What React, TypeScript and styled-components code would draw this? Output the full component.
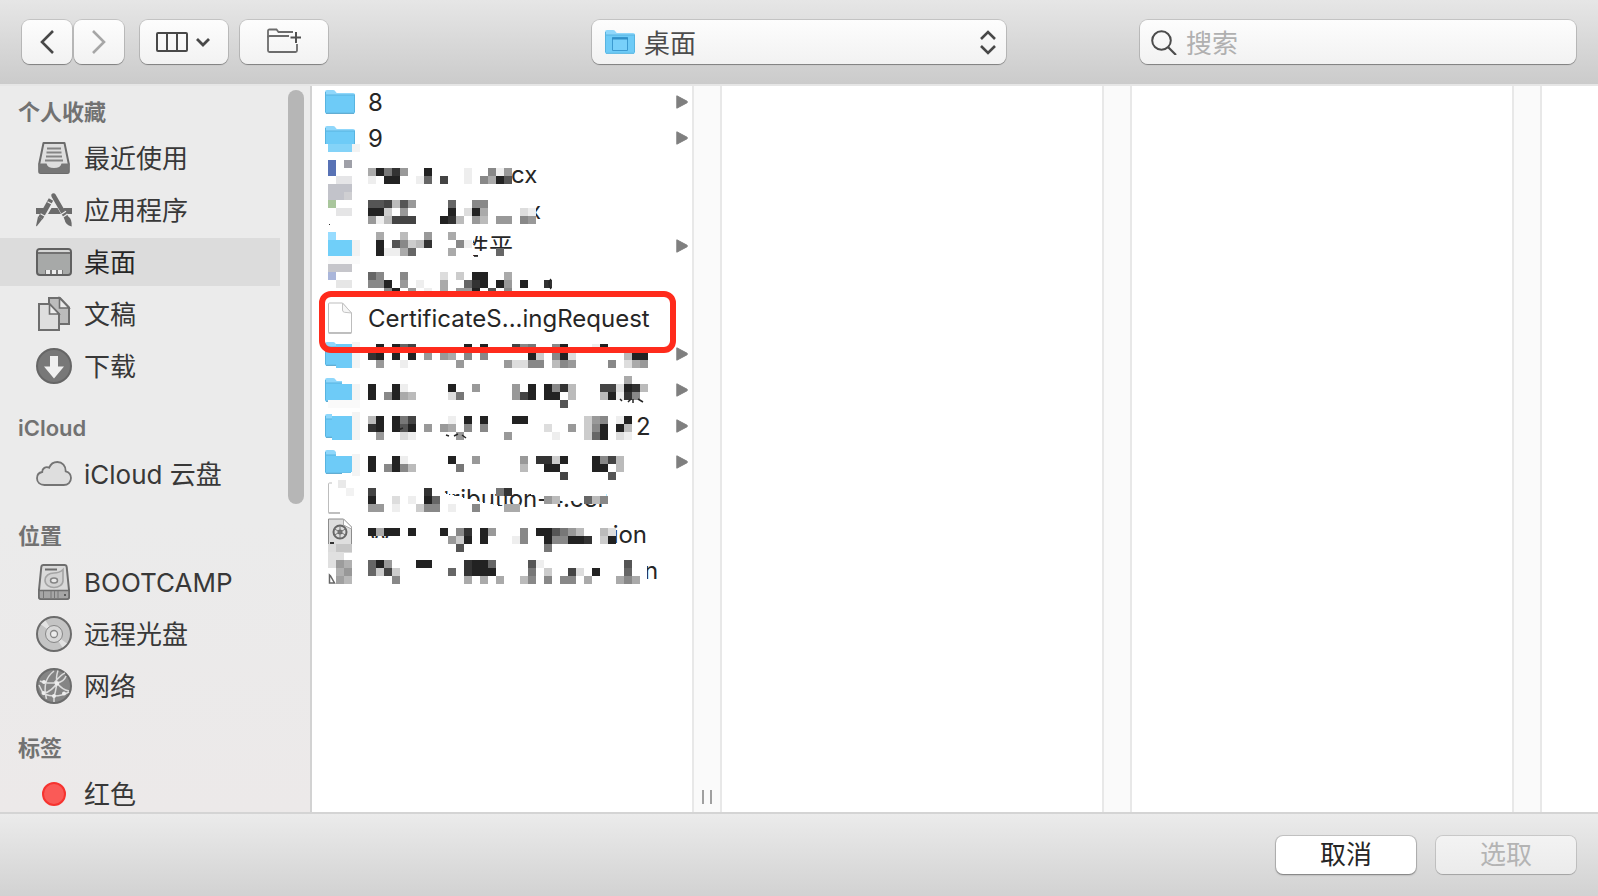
import React from "react";
import styled, { createGlobalStyle } from "styled-components";

const GlobalStyle = createGlobalStyle`
  *, *::before, *::after { box-sizing: border-box; }
  body { margin: 0; overflow: hidden; }
  body, button, input, select {
    font-family: Inter, "Noto Sans CJK SC", sans-serif;
    font-size: 26px;
  }
  svg { display: block; flex: none; }
`;

/* ---------- Window frame ---------- */

const Window = styled.div`
  display: flex;
  flex-direction: column;
  height: 100vh;
  background: #fff;
  color: #262626;
`;

const Toolbar = styled.header`
  position: relative;
  z-index: 1;
  display: grid;
  grid-template-columns: 1fr minmax(200px, 414px) 1fr;
  align-items: center;
  height: 84px;
  flex: none;
  padding: 0 22px;
  background: linear-gradient(#e6e6e6, #cbcbcb);
  box-shadow: 0 2px 0 #e6e6e6;
`;

const ToolGroup = styled.div<{ $gap: number }>`
  display: flex;
  gap: ${(p) => p.$gap}px;
`;

const raised = `
  border: 0;
  border-radius: 8px;
  background: linear-gradient(#fdfdfd, #f2f2f2);
  box-shadow: 0 0 0 1px rgba(0, 0, 0, 0.13), 0 1px 1px rgba(0, 0, 0, 0.3);
`;

const ToolButton = styled.button<{ $width: number }>`
  ${raised}
  display: flex;
  align-items: center;
  justify-content: center;
  width: ${(p) => p.$width}px;
  height: 44px;
  padding: 0;
`;

const Location = styled.div`
  position: relative;
  height: 44px;
`;

const LocationSelect = styled.select`
  ${raised}
  appearance: none;
  width: 100%;
  height: 44px;
  padding: 2px 48px 0 52px;
  color: #4c4c4c;
`;

const SelectIcon = styled.span<{ $side: "left" | "right" }>`
  position: absolute;
  top: 10px;
  ${(p) => (p.$side === "left" ? "left: 13px;" : "right: 10px;")}
  pointer-events: none;
`;

const Search = styled.label`
  ${raised}
  justify-self: end;
  display: flex;
  align-items: center;
  gap: 9px;
  width: min(436px, 90%);
  height: 44px;
  padding: 0 11px;
`;

const SearchInput = styled.input`
  flex: 1;
  min-width: 0;
  padding: 2px 0 0;
  border: 0;
  outline: 0;
  background: transparent;
  color: #262626;
  &::placeholder { color: #b0b0b0; opacity: 1; }
`;

const Browser = styled.main`
  display: flex;
  flex: 1;
  min-height: 0;
  overflow: hidden;
`;

const Footer = styled.footer`
  display: flex;
  justify-content: flex-end;
  gap: 20px;
  flex: none;
  padding: 22px;
  border-top: 2px solid #d4d4d4;
  background: linear-gradient(#ebebeb, #d2d2d2);
`;

const DialogButton = styled.button`
  width: 140px;
  height: 38px;
  padding: 0;
  border: 0;
  border-radius: 7px;
  background: #fff;
  box-shadow: 0 0 0 1px rgba(0, 0, 0, 0.14), 0 1px 2px rgba(0, 0, 0, 0.35);
  color: #262626;
  line-height: 38px;
  &:disabled {
    background: linear-gradient(#f3f3f3, #ebebeb);
    box-shadow: 0 0 0 1px rgba(0, 0, 0, 0.12), 0 1px 1px rgba(0, 0, 0, 0.14);
    color: #b4b4b4;
  }
`;

/* ---------- Sidebar ---------- */

const Sidebar = styled.nav`
  display: flex;
  justify-content: space-between;
  flex: none;
  width: 312px;
  padding-right: 6px;
  border-right: 2px solid #d2d2d2;
  background: linear-gradient(#ebebeb 60%, #ece9e9);
`;

const Places = styled.div`
  width: 280px;
  padding-top: 10px;
`;

const ScrollThumb = styled.div`
  width: 16px;
  height: 414px;
  margin-top: 6px;
  border-radius: 8px;
  background: #b6b6b6;
`;

const Section = styled.section`
  margin-bottom: 20px;
`;

const SectionTitle = styled.h2`
  height: 36px;
  margin: 0 0 4px;
  padding-left: 18px;
  color: #727272;
  font-size: 22px;
  font-weight: 600;
  line-height: 36px;
`;

const PlaceList = styled.ul`
  display: flex;
  flex-direction: column;
  gap: 4px;
  margin: 0;
  padding: 0;
  list-style: none;
`;

const Place = styled.a<{ $current?: boolean }>`
  display: flex;
  align-items: center;
  gap: 12px;
  height: 48px;
  padding-left: 36px;
  background: ${(p) => (p.$current ? "#dcdcdc" : "transparent")};
  color: ${(p) => (p.$current ? "#262626" : "#383838")};
  text-decoration: none;
  white-space: nowrap;
`;

const PlaceName = styled.span`
  padding-top: 2px;
  line-height: 46px;
`;

/* ---------- Columns ---------- */

const Column = styled.div`
  position: relative;
  flex: none;
  width: 380px;
`;

const Splitter = styled.div`
  display: flex;
  align-items: flex-end;
  justify-content: center;
  gap: 6px;
  flex: none;
  width: 30px;
  padding-bottom: 8px;
  border: solid #e8e8e8;
  border-width: 0 2px;
  background: #fafafa;
`;

const Grip = styled.span`
  width: 2px;
  height: 14px;
  background: #a0a0a0;
`;

const Files = styled.ul`
  margin: 0;
  padding: 0;
  list-style: none;
`;

const FileRow = styled.li`
  position: relative;
  display: grid;
  grid-template-columns: 30px 1fr 12px;
  column-gap: 13px;
  align-items: center;
  height: 36px;
  padding: 0 4px 0 13px;
`;

const FileName = styled.span`
  display: flex;
  padding-top: 2px;
  font-size: 24px;
  line-height: 34px;
  white-space: nowrap;
`;

const Fragment = styled.span<{ $indent: number }>`
  margin-left: ${(p) => p.$indent}px;
`;

const Highlight = styled.span`
  position: absolute;
  inset: -9px 16px -17px 7px;
  z-index: 1;
  border: 6px solid #ff2b1c;
  border-radius: 12px;
`;

const Redaction = styled.svg`
  position: absolute;
  top: 0;
  left: 0;
  pointer-events: none;
`;

/* ---------- Icons ---------- */

const FolderIcon = () => (
  <svg width="30" height="24" viewBox="0 0 30 24">
    <path d="M0 2q0-2 2-2h6q1.500 0 2.300 1.200l.9 1.200q.6.700 1.800.7H28q2 0 2 1.500V23H0z" fill="#8fd7fb" />
    <path d="M0 5h30v17q0 1.500-1.500 1.500h-27Q0 23.500 0 22z" fill="#6ecbf7" />
    <path d="M0 5h30M.5 2v20M29.500 5v17" stroke="#58b4e0" strokeWidth="1" fill="none" />
    <path d="M1 23.300h28" stroke="#4f9fc8" strokeWidth="1" />
  </svg>
);

const DesktopFolderIcon = () => (
  <svg width="30" height="24" viewBox="0 0 30 24">
    <path d="M0 2q0-2 2-2h6q1.500 0 2.300 1.200l.9 1.200q.6.700 1.800.7H28q2 0 2 1.500V23H0z" fill="#8fd7fb" />
    <path d="M0 5h30v17q0 1.500-1.500 1.500h-27Q0 23.500 0 22z" fill="#6ecbf7" />
    <path d="M0 5h30M.5 2v20M29.500 5v17M1 23.300h28" stroke="#58b4e0" fill="none" />
    <path d="M7.500 7.500h15v13h-15z" fill="#78d0fa" stroke="#3c9ad0" />
    <path d="M7 8.500h16" stroke="#3190c8" strokeWidth="2" />
  </svg>
);

const DocumentIcon = () => (
  <svg width="30" height="32" viewBox="0 0 30 32">
    <path d="M3.500 2q0-1 1-1h13l9 10v19q0 1-1 1h-21q-1 0-1-1z" fill="#fff" stroke="#bdbdbd" />
    <path d="M17.500 1v7q0 2 2 2.300l7 .7z" fill="#f6f6f6" stroke="#c4c4c4" />
    <path d="M3.500 31h23" stroke="#9f9f9f" />
  </svg>
);

const CertificateIcon = () => (
  <svg width="30" height="32" viewBox="0 0 30 32">
    <path d="M3.500 1h15l8 8v22h-23z" fill="#dedede" stroke="#8c8c8c" />
    <path d="M18.500 1l8 8v2l-8-4z" fill="#fff" stroke="#aaa" />
    <circle cx="15" cy="14" r="6.500" fill="#ddd" stroke="#666" strokeWidth="2" />
    <circle cx="15" cy="14" r="2.500" fill="#666" />
    <path d="M15 8v12M9.500 11l11 6M9.500 17l11-6" stroke="#777" />
    <path d="M6 30v-5h3" stroke="#333" strokeWidth="2" fill="none" />
  </svg>
);

const Disclosure = () => (
  <svg width="12" height="14" viewBox="0 0 12 14">
    <path d="M.8.800 11 6.200q1 .8 0 1.600L.8 13.200z" fill="#7f7f7f" stroke="#7f7f7f" strokeLinejoin="round" />
  </svg>
);

const SideIcon = ({ children }: { children: React.ReactNode }) => (
  <svg width="36" height="36" viewBox="0 0 36 36" fill="none">{children}</svg>
);

const RecentsIcon = () => (
  <SideIcon>
    <path d="M7.500 3h21l4.300 21v7.500q0 1.500-1.500 1.500H4.700q-1.500 0-1.500-1.500V24z" fill="#dedede" stroke="#6c6c6c" strokeWidth="2" strokeLinejoin="round" />
    <path d="M2.500 23.500h8q1 4.500 7.500 4.500t7.500-4.500h8l-1.200 9.500H3.700z" fill="#777" />
    <path d="M11 8.500h14M10.500 12.500h15M10 16.500h16M9 20.500h18" stroke="#848484" strokeWidth="2" />
  </SideIcon>
);

const ApplicationsIcon = () => (
  <SideIcon>
    <path d="M0 16h8.500l-3 6H0zM15.500 16h6l3.500 6H12zM27 16h9v6h-5.500z" fill="#6b6b6b" />
    <path d="M15 7.500 4.500 26" stroke="#6b6b6b" strokeWidth="5" />
    <path d="M2 24.500l4.500 2.600L.8 34.200q-.8.300-.7-.6z" fill="#6b6b6b" />
    <path d="M17.500 3.500 30.500 26" stroke="#6b6b6b" strokeWidth="4.500" strokeLinecap="round" />
    <path d="M28.500 27l4-2.300q3.500 2 3.200 9.800-6.500-1.500-7.200-7.500z" fill="#6b6b6b" />
    <path d="M11.500 9.800l5 2.800M4.500 21.800l5 2.800M26.500 25.500l5-3.500M25 22.500l5-3.200" stroke="#ebebeb" strokeWidth="1.200" />
  </SideIcon>
);

const DesktopIcon = () => (
  <SideIcon>
    <rect x="1" y="5" width="34" height="26" rx="3" fill="#a7a9a8" stroke="#606060" strokeWidth="2" />
    <path d="M2 8q0-2 2-2h28q2 0 2 2z" fill="#d5d6d5" />
    <path d="M1 9h34" stroke="#606060" strokeWidth="1.600" />
    <path d="M9 26h18v4H9z" fill="#777" />
    <path d="M10 26h4v4h-4zM16 26h4v4h-4zM22 26h4v4h-4z" fill="#ececec" />
  </SideIcon>
);

const DocumentsIcon = () => (
  <SideIcon>
    <path d="M13 2h11l9 9.500V28H13z" fill="#bcbcbc" stroke="#6e6e6e" strokeWidth="2" />
    <path d="M23.500 2v10H33z" fill="#ebebeb" stroke="#6e6e6e" strokeWidth="1.600" />
    <path d="M3 8h10.500L23 18v16H3z" fill="#dedede" stroke="#6e6e6e" strokeWidth="2" />
    <path d="M13.500 8v10H23z" fill="#ececec" stroke="#6e6e6e" strokeWidth="1.600" />
  </SideIcon>
);

const DownloadsIcon = () => (
  <SideIcon>
    <circle cx="18" cy="18" r="17" fill="#787878" stroke="#666" strokeWidth="2" />
    <path d="M14 8h8v10.500h6L18 30.500 8 18.500h6z" fill="#f0f0f0" />
  </SideIcon>
);

const CloudIcon = () => (
  <SideIcon>
    <path d="M8.500 29C4 29 1 26.200 1 22.300c0-3.300 2-5.700 5.200-6.300-.2-3.600 3.600-6 7-4.300C14.700 7.900 17.800 6 21.300 6c5 0 8.600 3.900 8.400 9.300 3.200.8 5.300 3.500 5.300 6.800 0 4-3 6.900-7.300 6.900z" fill="#dedede" stroke="#747474" strokeWidth="1.800" />
  </SideIcon>
);

const DiskIcon = () => (
  <SideIcon>
    <path d="M7.500 1h21q2 0 2.200 2L33 26v7q0 2-2 2H5q-2 0-2-2v-7L5.300 3q.2-2 2.200-2z" fill="#dadada" stroke="#6e6e6e" strokeWidth="2" />
    <path d="M3 26.500h30V33q0 2-2 2H5q-2 0-2-2z" fill="#a6a6a6" stroke="#6e6e6e" strokeWidth="1.600" />
    <path d="M9 5.500h12" stroke="#6e6e6e" strokeWidth="2" />
    <path d="M27 5.500v11c0 4.500-4.500 7-9 7s-9-2.800-9-7.200 4-7.300 9-7.300c3 0 6.500-1 9-3.500z" fill="#d2d2d2" stroke="#a4a4a4" strokeWidth="1.600" />
    <ellipse cx="18" cy="16.500" rx="3.500" ry="2.500" fill="#e8e8e8" stroke="#858585" strokeWidth="1.500" />
    <path d="M7.500 27v7M15 27v7M18.500 27v7M22 27v7" stroke="#777" />
    <circle cx="29" cy="31" r="1" fill="#444" />
  </SideIcon>
);

const DiscIcon = () => (
  <SideIcon>
    <circle cx="18" cy="18" r="17" fill="#c4c4c4" stroke="#6c6c6c" strokeWidth="2" />
    <path d="M18 18 5 8.500 9.500 4.500zM18 18l13 9.500-4.500 4z" fill="#e3e3e3" />
    <circle cx="18" cy="18" r="8.500" fill="#d8d8d8" stroke="#868686" />
    <circle cx="18" cy="18" r="3.500" fill="#ececec" stroke="#868686" strokeWidth="1.300" />
  </SideIcon>
);

const NetworkIcon = () => (
  <SideIcon>
    <circle cx="18" cy="18" r="17" fill="#858585" stroke="#6c6c6c" strokeWidth="2" />
    <g stroke="#dcdcdc" strokeWidth="1.500">
      <path d="M18 3C10 9 7 18 10.500 31M22 2.500c-2 6-2 9-1 13M4 13c6 3 12 2 17 2 5-1 8-4 9-7M8 26c8 3 16 3 25-2M21 15c3 4 7 7 12 8M21 15c-3 5-8 9-14 11M18 28v6M3 17l5 10M21 15c-1 4-1 9-3 13M18 15c5-6 8-9 11-10" />
    </g>
    <g fill="#ededed">
      <circle cx="8" cy="14" r="2" /><circle cx="21" cy="15.500" r="2.200" /><circle cx="7.500" cy="25" r="2" />
      <circle cx="18" cy="28" r="2" /><circle cx="28" cy="25.500" r="2" />
    </g>
  </SideIcon>
);

const RedTagIcon = () => (
  <SideIcon>
    <circle cx="18" cy="18" r="11" fill="#fa5a57" stroke="#f6332f" strokeWidth="2" />
  </SideIcon>
);

/* ---------- Data ---------- */

const sections = [
  {
    title: "个人收藏",
    places: [
      { name: "最近使用", Icon: RecentsIcon },
      { name: "应用程序", Icon: ApplicationsIcon },
      { name: "桌面", Icon: DesktopIcon, current: true },
      { name: "文稿", Icon: DocumentsIcon },
      { name: "下载", Icon: DownloadsIcon },
    ],
  },
  { title: "iCloud", places: [{ name: "iCloud 云盘", Icon: CloudIcon }] },
  {
    title: "位置",
    places: [
      { name: "BOOTCAMP", Icon: DiskIcon },
      { name: "远程光盘", Icon: DiscIcon },
      { name: "网络", Icon: NetworkIcon },
    ],
  },
  { title: "标签", places: [{ name: "红色", Icon: RedTagIcon }] },
];

type Kind = "folder" | "document" | "certificate" | "hidden";
type Entry = { kind: Kind; parts: [string, number][]; marked?: boolean };

const files: Entry[] = [
  { kind: "folder", parts: [["8", 0]] },
  { kind: "folder", parts: [["9", 0]] },
  { kind: "hidden", parts: [["cx", 143]] },
  { kind: "hidden", parts: [["x", 160]] },
  { kind: "folder", parts: [["性平", 97]] },
  { kind: "hidden", parts: [] },
  { kind: "document", parts: [["CertificateS...ingRequest", 0]], marked: true },
  { kind: "folder", parts: [] },
  { kind: "folder", parts: [] },
  { kind: "folder", parts: [["2", 268]] },
  { kind: "folder", parts: [] },
  { kind: "document", parts: [["tribution-4.cer", 75]] },
  { kind: "certificate", parts: [["W", 0], ["ion", 221]] },
  { kind: "hidden", parts: [["n", 276]] },
];

const icons: Record<Kind, React.FC> = {
  folder: FolderIcon,
  document: DocumentIcon,
  certificate: CertificateIcon,
  hidden: () => <span />,
};

/* Mosaic over the private names: one string per 8px line, one hex grey per tile. */
const tile = 8;
const mosaic: [number, string][] = [
  [84, "a2739..2....e..8e9"],
  [92, "e.22..e6.4..e.8a25"],
  [116, "554b59....6..88"],
  [124, "22cf9.....2.d2a....de"],
  [132, "9eb444...23b.9b.99.89"],
  [148, ".a..b..9..a"],
  [156, ".2.58cb3f..8e"],
  [164, ".2eea6f...a.....6"],
  [188, "68f.8....d.c.22..a"],
  [196, "882f9.e..a..632.29.2..3"],
  [204, "..82.9.e.a.992.5.8"],
  [260, ".2.264....f.2.2...487..82...e2"],
  [268, "32.2.2.9.9a.8.8.....2c.82d......b22"],
  [276, ".9f.ef.....9.....9dd88.b89....8.da9"],
  [292, "................................a"],
  [300, "2..2e.....2..9.f..9.2.283b...44d23b"],
  [308, "2.82ab....d7.....f942.22fb...b2e38"],
  [316, "........................5"],
  [332, "b2.274....e.2.2...22.......c98.e2"],
  [340, "32.252.9.9a.8.8.......d..9.c82f2b"],
  [348, ".9f.de.....9.....9.....e...c62.de"],
  [372, "2..2e.....2..9.f...9.33c2...284b"],
  [380, "2.828b.....7.......b.f22f...22fb"],
  [388, "........................4.....5"],
  [404, "4......3........73"],
  [412, "2..d.e.26.............9b...6b8"],
  [420, "99.e..c88.e..8...aa"],
  [444, "2a22.2...2.83.29...8.22579b..bd"],
  [452, "..........9c2.2...e8..288223.c2"],
  [460, "...........5..........7"],
  [476, "629...22....3226....5e..........5"],
  [484, "6c4c......6.3222....7.c..4d.2..f6"],
  [492, "...8.......fa.a.a..b8.8.88.a...a8a"],
];

/* Coloured blocks over the file icons: x, y, width, height, colour. */
const blocks: [number, number, number, number, string][] = [
  [12, 60, 32, 20, "#fff"], [16, 60, 24, 8, "#84d3f8"], [40, 60, 8, 8, "#f3f3f3"],
  [16, 76, 8, 16, "#5872b5"], [32, 76, 8, 8, "#9fa0a8"], [24, 92, 16, 8, "#e5e5e7"],
  [16, 100, 24, 16, "#c2c3ca"], [32, 108, 8, 8, "#cfcfd2"], [16, 116, 8, 8, "#a9c69c"],
  [24, 124, 16, 8, "#e5e5e6"], [17, 140, 1, 1, "#333"],
  [12, 144, 32, 32, "#fff"], [16, 148, 8, 8, "#97dcff"], [16, 156, 24, 16, "#70cff9"],
  [40, 156, 8, 16, "#f2f2f2"], [16, 172, 32, 8, "#fafafa"], [16, 180, 24, 8, "#c6c6cb"],
  [16, 188, 8, 8, "#aab6da"], [24, 196, 16, 8, "#e6e6e6"],
  [24, 260, 16, 24, "#6ecbf7"], [40, 258, 8, 26, "#f4f4f4"],
  [30, 292, 18, 8, "#fff"], [24, 300, 16, 16, "#6ecbf7"], [40, 300, 8, 16, "#f4f4f4"], [16, 316, 32, 8, "#fafafa"],
  [20, 328, 28, 4, "#fff"], [20, 332, 20, 24, "#6ecbf7"], [40, 328, 8, 28, "#f4f4f4"],
  [24, 364, 24, 8, "#fff"], [24, 372, 16, 16, "#6ecbf7"], [40, 370, 8, 22, "#f4f4f4"],
  [28, 392, 20, 40, "#fff"], [26, 396, 8, 8, "#e9e9e9"], [34, 404, 8, 8, "#f2f2f2"],
  [40, 432, 8, 32, "#fff"], [16, 460, 24, 9, "#dcdcdc"], [24, 460, 16, 8, "#c6c6c6"],
  [16, 468, 16, 16, "#e0e0e0"], [24, 476, 8, 8, "#9c9c9c"], [32, 476, 8, 8, "#b0b0b0"],
  [24, 484, 8, 8, "#b0b0b0"], [32, 484, 8, 8, "#989898"], [24, 492, 8, 8, "#a0a0a0"], [32, 492, 8, 8, "#b8b8b8"],
];

/* Brushed-out areas that hide part of a name. */
const smudges = [
  "M56 67h18v8H56z",
  "M190 84h4l7 18h-11z",
  "M200 116h17l6 4-4 10 4 12h-23z",
  "M150 144h60v8h-47l-3 8 2 16h-12z",
  "M166 167h42v12h-42z",
  "M118 404l17 6 18 4 20 5 30 6v7h-85z",
  "M214 398h80v19l-22 1-20-2-24-3-14-4z",
  "M54 436h40v8H54zM54 454h40v10H54z",
  "M284 440h14v8l-5 8h-9z",
  "M326 470h7l2 10v20h-9z",
  "M20 392q6-3 26-4v-8h4v20H20z",
];

const RedactionLayer = () => (
  <Redaction width="380" height="510" viewBox="0 0 380 510" shapeRendering="crispEdges" aria-hidden="true">
    {smudges.map((d) => <path key={d} d={d} fill="#fff" />)}
    {blocks.map(([x, y, w, h, fill], i) => <rect key={i} x={x} y={y} width={w} height={h} fill={fill} />)}
    {mosaic.map(([y, line]) =>
      [...line].map((c, i) =>
        c === "." ? null : <rect key={`${y}-${i}`} x={56 + i * tile} y={y} width={tile} height={tile} fill={`#${c}${c}${c}${c}${c}${c}`} />
      )
    )}
    <g fill="none" stroke="#262626" strokeWidth="1.500" shapeRendering="auto">
      <path d="M239 195q-4 4 0 10" />
      <path d="M308 315l2 2M316 318l3-3M321 315v4M326 315l5 3" />
      <path d="M134 351l3 1M142 352l4-2M150 351l4 3M86 346l5-2" />
      <path d="M17.500 491v8h5l-4-7z" stroke="#666" />
    </g>
  </Redaction>
);

export default function App() {
  return (
    <Window>
      <GlobalStyle />
      <Toolbar>
        <ToolGroup $gap={16}>
          <ToolGroup $gap={2}>
            <ToolButton $width={50} aria-label="后退">
              <svg width="16" height="24" viewBox="0 0 16 24" fill="none" stroke="#484848" strokeWidth="2.600">
                <path d="M14 1 3 12l11 11" />
              </svg>
            </ToolButton>
            <ToolButton $width={50} aria-label="前进" disabled>
              <svg width="16" height="24" viewBox="0 0 16 24" fill="none" stroke="#a6a6a6" strokeWidth="2.600">
                <path d="M2 1l11 11L2 23" />
              </svg>
            </ToolButton>
          </ToolGroup>
          <ToolGroup $gap={12}>
            <ToolButton $width={88} aria-label="显示方式">
              <svg width="56" height="20" viewBox="0 0 56 20" fill="none" stroke="#484848" strokeWidth="2">
                <rect x="1" y="1" width="30" height="18" rx="1" />
                <path d="M11 1v18M21 1v18" />
                <path d="M41 7l6 6 6-6" strokeWidth="2.800" />
              </svg>
            </ToolButton>
            <ToolButton $width={88} aria-label="新建文件夹">
              <svg width="34" height="28" viewBox="0 0 34 28" fill="none" stroke="#6c6c6c" strokeWidth="1.800">
                <path d="M26 4H11.500L9.500 1.500H2.500Q1 1.500 1 3v19.500Q1 24 2.500 24h26q1.500 0 1.500-1.500V16" />
                <path d="M1 9.500Q1 8 2.500 8H22" />
                <path d="M29 4v11M23.500 9.500h11" stroke="#505050" strokeWidth="2" />
              </svg>
            </ToolButton>
          </ToolGroup>
        </ToolGroup>

        <Location>
          <LocationSelect aria-label="位置" defaultValue="桌面">
            <option>桌面</option>
          </LocationSelect>
          <SelectIcon $side="left"><DesktopFolderIcon /></SelectIcon>
          <SelectIcon $side="right">
            <svg width="16" height="25" viewBox="0 0 16 25" fill="none" stroke="#484848" strokeWidth="2.600">
              <path d="M1 9l7-7 7 7M1 16l7 7 7-7" />
            </svg>
          </SelectIcon>
        </Location>

        <Search>
          <svg width="26" height="26" viewBox="0 0 26 26" fill="none" stroke="#4c4c4c" strokeWidth="2">
            <circle cx="10.500" cy="11.500" r="9.300" />
            <path d="M17 18l8 8" strokeWidth="2.200" />
          </svg>
          <SearchInput type="text" placeholder="搜索" aria-label="搜索" />
        </Search>
      </Toolbar>

      <Browser>
        <Sidebar>
          <Places>
            {sections.map(({ title, places }) => (
              <Section key={title}>
                <SectionTitle>{title}</SectionTitle>
                <PlaceList>
                  {places.map(({ name, Icon, ...rest }) => (
                    <li key={name}>
                      <Place href="#" $current={"current" in rest}>
                        <Icon />
                        <PlaceName>{name}</PlaceName>
                      </Place>
                    </li>
                  ))}
                </PlaceList>
              </Section>
            ))}
          </Places>
          <ScrollThumb />
        </Sidebar>

        <Column>
          <Files>
            {files.map(({ kind, parts, marked }, i) => {
              const Icon = icons[kind];
              return (
                <FileRow key={i}>
                  <Icon />
                  <FileName>
                    {parts.map(([text, indent]) => <Fragment key={text} $indent={indent}>{text}</Fragment>)}
                  </FileName>
                  {kind === "folder" && <Disclosure />}
                  {marked && <Highlight />}
                </FileRow>
              );
            })}
          </Files>
          <RedactionLayer />
        </Column>
        <Splitter><Grip /><Grip /></Splitter>
        <Column />
        <Splitter />
        <Column />
        <Splitter />
      </Browser>

      <Footer>
        <DialogButton>取消</DialogButton>
        <DialogButton disabled>选取</DialogButton>
      </Footer>
    </Window>
  );
}
